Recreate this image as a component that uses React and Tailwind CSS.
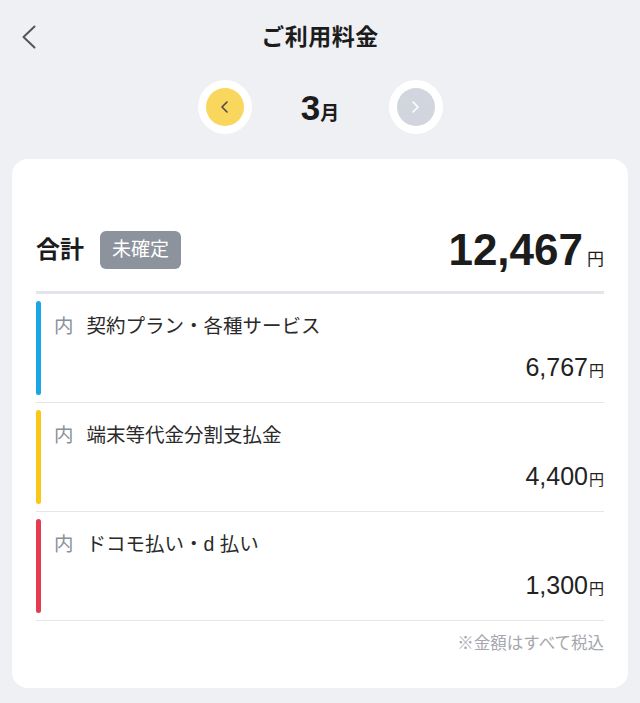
const rows = [
  { color: "bg-[#1aa6e6]", label: "契約プラン・各種サービス", amount: "6,767" },
  { color: "bg-[#f9c716]", label: "端末等代金分割支払金", amount: "4,400" },
  { color: "bg-[#e43b50]", label: "ドコモ払い・d 払い", amount: "1,300" },
];

function Chevron({ dir = "left", className = "" }) {
  const pts = dir === "left" ? "6,1 1,6 6,11" : "1,1 6,6 1,11";
  return (
    <svg width="7" height="12" viewBox="0 0 7 12" className={className}>
      <polyline points={pts} fill="none" stroke="currentColor" strokeWidth="1.6" strokeLinecap="round" strokeLinejoin="round" />
    </svg>
  );
}

export default function App() {
  return (
    <div
      className="min-h-screen w-full bg-[#eff0f4] text-[#1c1c1c]"
      style={{ fontFamily: '"Liberation Sans", "Noto Sans CJK JP", sans-serif' }}
    >
      {/* header */}
      <div className="relative h-[74px] flex items-center justify-center">
        <button className="absolute left-[22px] top-[25px] text-[#555]" aria-label="back">
          <svg width="14" height="24" viewBox="0 0 14 24">
            <polyline points="12.5,1.5 1.5,12 12.5,22.5" fill="none" stroke="currentColor" strokeWidth="2" strokeLinecap="round" strokeLinejoin="round" />
          </svg>
        </button>
        <h1 className="text-[23px] font-bold tracking-[0.5px]">ご利用料金</h1>
      </div>

      {/* month switcher */}
      <div className="mt-[6px] flex items-center justify-center">
        <div className="w-[54px] h-[54px] rounded-full bg-white flex items-center justify-center">
          <div className="w-[38px] h-[38px] rounded-full bg-[#f9d65c] flex items-center justify-center text-[#4a4a4a]">
            <Chevron dir="left" />
          </div>
        </div>
        <div className="w-[137px] flex items-baseline justify-center font-bold">
          <span className="text-[35px] leading-none">3</span>
          <span className="text-[19px] leading-none">月</span>
        </div>
        <div className="w-[54px] h-[54px] rounded-full bg-white flex items-center justify-center">
          <div className="w-[38px] h-[38px] rounded-full bg-[#d1d5de] flex items-center justify-center text-white">
            <Chevron dir="right" />
          </div>
        </div>
      </div>

      {/* card */}
      <div className="mx-3 mt-[25px] bg-white rounded-2xl px-6 pt-[72px] pb-[35px]">
        <div className="h-[38px] flex items-center justify-between">
          <div className="flex items-center gap-4">
            <span className="text-[24px] font-bold leading-none">合計</span>
            <span className="h-[38px] px-[12px] rounded-md bg-[#8d939d] text-white text-[19px] flex items-center">
              未確定
            </span>
          </div>
          <div className="flex items-baseline text-[#1c1c1c]">
            <span className="text-[44px] font-bold leading-none">12,467</span>
            <span className="text-[17px] ml-[4px] leading-none">円</span>
          </div>
        </div>
        <div className="mt-[22px] h-[3px] bg-[#e4e5ea]" />

        {rows.map((r) => (
          <div key={r.label} className="flex pt-[7px] pb-[7px] border-b border-[#e5e6eb]">
            <div className={`w-[5px] h-[94px] rounded-full ${r.color}`} />
            <div className="flex-1 pl-[13px]">
              <div className="mt-[13px] h-[26px] flex items-center text-[19.5px]">
                <span className="text-[#8a8f98]">内</span>
                <span className="ml-[13px] text-[#2a2a2a]">{r.label}</span>
              </div>
              <div className="mt-[12px] flex items-baseline justify-end text-[#222]">
                <span className="text-[25px] leading-[30px]">{r.amount}</span>
                <span className="text-[15px] ml-[1px]">円</span>
              </div>
            </div>
          </div>
        ))}

        <p className="mt-[12px] text-right text-[16.5px] leading-[20px] text-[#a4a7ad]">※金額はすべて税込</p>
      </div>
    </div>
  );
}
